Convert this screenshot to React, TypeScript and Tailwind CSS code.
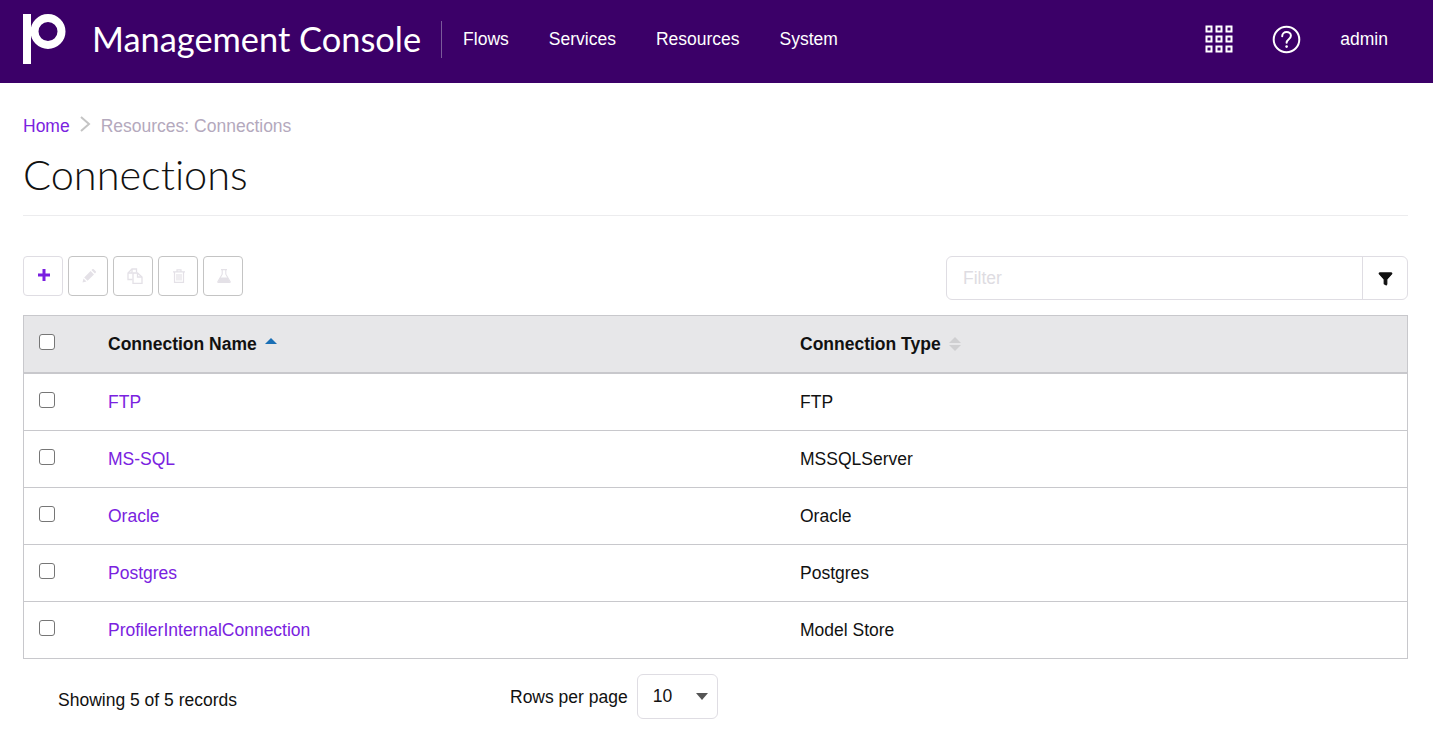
import type { ReactNode } from 'react';
import { Filter } from 'lucide-react';

const rows = [
  { name: 'FTP', type: 'FTP' },
  { name: 'MS-SQL', type: 'MSSQLServer' },
  { name: 'Oracle', type: 'Oracle' },
  { name: 'Postgres', type: 'Postgres' },
  { name: 'ProfilerInternalConnection', type: 'Model Store' },
];

function Logo() {
  return (
    <svg width="43" height="50" viewBox="0 0 43 50" fill="none">
      <rect x="0" y="0" width="8" height="50" fill="#fff" />
      <circle cx="25" cy="17.5" r="13.5" stroke="#fff" strokeWidth="8" />
    </svg>
  );
}

function GridIcon() {
  return (
    <svg width="28" height="28" viewBox="0 0 28 28" fill="none" stroke="#fff" strokeWidth="2">
      {[1.5, 11.5, 21.5].map((y) =>
        [1.5, 11.5, 21.5].map((x) => <rect key={`${x}-${y}`} x={x} y={y} width="5" height="5" />),
      )}
    </svg>
  );
}

function HelpIcon() {
  return (
    <svg width="29" height="29" viewBox="0 0 29 29" fill="none" stroke="#fff" strokeWidth="2">
      <circle cx="14.5" cy="14.5" r="12.8" />
      <path d="M10.2 11.2c0-2.6 2-4.2 4.4-4.2s4.3 1.6 4.3 3.8c0 3.4-4.3 3.4-4.3 7" strokeLinecap="round" />
      <circle cx="14.6" cy="21.6" r="1.3" fill="#fff" stroke="none" />
    </svg>
  );
}

function PencilIcon() {
  return (
    <svg className="ml-[2px]" width="14" height="14" viewBox="0 0 14 14" fill="#e4e1e7">
      <path d="M0.5 13.5l1-4 3 3zM2.2 8.4l6.4-6.4 3.4 3.4-6.4 6.4zM9.5 1.1l.8-.8c.4-.4 1-.4 1.4 0l2 2c.4.4.4 1 0 1.4l-.8.8z" />
    </svg>
  );
}

function CopyIcon() {
  return (
    <svg className="ml-[3px]" width="16" height="16" viewBox="0 0 16 16" fill="none" stroke="#e4e1e7" strokeWidth="1.3">
      <path d="M5.5 11.5H1V5l4-4h4.5v3.5" />
      <path d="M1 5h4V1" />
      <path d="M6 5h4.5L15 9v6.4H6z" />
      <path d="M10.5 5v4H15" />
    </svg>
  );
}

function TrashIcon() {
  return (
    <svg className="ml-[2px]" width="12" height="14" viewBox="0 0 12 14" fill="none" stroke="#e4e1e7" strokeWidth="1.2">
      <path d="M0 2.8h12M4 2.5V.8h4v1.7M1.5 3v10.4h9V3M4 5v6.5M6 5v6.5M8 5v6.5" />
    </svg>
  );
}

function FlaskIcon() {
  return (
    <svg className="ml-[2px]" width="14" height="14" viewBox="0 0 14 14" fill="none">
      <path d="M4 .6h6M5.2.6v4.6L.9 12.6c-.3.5 0 .9.5.9h11.2c.5 0 .8-.4.5-.9L8.800 5.200V.6" stroke="#e4e1e7" strokeWidth="1.1" />
      <path d="M3.400 8.500h7.200l2.600 5H.8z" fill="#e4e1e7" />
    </svg>
  );
}

function ToolButton({ children, light }: { children: ReactNode; light?: boolean }) {
  return (
    <button className={`flex h-10 w-10 items-center justify-center rounded border bg-white ${light ? 'border-[#dfdde3]' : 'border-[#c4c4c4]'}`}>
      {children}
    </button>
  );
}

function SortUp() {
  return <span className="ml-2 mt-[-5px] block border-x-[6px] border-b-[6px] border-x-transparent border-b-[#1a6fb5]" />;
}

function SortBoth() {
  return (
    <span className="ml-2 flex flex-col gap-[2px]">
      <span className="block border-x-[6px] border-b-[6px] border-x-transparent border-b-[#cfcfd1]" />
      <span className="block border-x-[6px] border-t-[6px] border-x-transparent border-t-[#cfcfd1]" />
    </span>
  );
}

function Check() {
  return <span className="block h-4 w-4 rounded-[3px] border border-[#767676] bg-white" />;
}

export default function App() {
  return (
    <div className="min-h-[738px] bg-white font-['Liberation_Sans',Arial,sans-serif] text-[17.5px] text-[#111]">
      <header className="flex h-[83px] items-center bg-[#3b0068] pl-[23px] pr-[45px] text-white">
        <div className="mt-[-5px]"><Logo /></div>
        <div className="ml-[26px] mt-[-5px] font-['Lato',sans-serif] text-[34.4px] font-normal whitespace-nowrap [font-variant-ligatures:none]">Management Console</div>
        <div className="ml-5 mt-[-5px] h-[37px] w-px bg-[#7a5a9a]" />
        <nav className="ml-[21px] mt-[-5px] flex gap-10">
          <span>Flows</span>
          <span>Services</span>
          <span>Resources</span>
          <span>System</span>
        </nav>
        <div className="ml-auto mt-[-5px] flex items-center">
          <GridIcon />
          <div className="ml-[39px]"><HelpIcon /></div>
          <span className="ml-[39px]">admin</span>
        </div>
      </header>

      <main className="pl-[23px] pr-[25px]">
        <div className="mt-[33px] flex items-center leading-[20px]">
          <span className="text-[#7a22e0]">Home</span>
          <svg className="mx-[9px] mt-[-4px]" width="13" height="18" viewBox="0 0 13 18" fill="none" stroke="#c4c4c4" strokeWidth="2">
            <path d="M2 2l8 7-8 7" />
          </svg>
          <span className="text-[#b4a9bd]">Resources: Connections</span>
        </div>
        <h1 className="mt-[11px] border-b border-[#ececee] pb-[14px] font-['Lato',sans-serif] text-[41.5px] font-light leading-[54px] text-[#111] [font-variant-ligatures:none]">Connections</h1>

        <div className="mt-10 flex items-start justify-between">
          <div className="flex gap-[5px]">
            <ToolButton light>
              <svg className="ml-[2px] mt-[-2px]" width="12" height="12" viewBox="0 0 12 12" fill="#7a1fe0"><path d="M4.500 0h3v4.500H12v3H7.500V12h-3V7.500H0v-3h4.500z" /></svg>
            </ToolButton>
            <ToolButton><PencilIcon /></ToolButton>
            <ToolButton><CopyIcon /></ToolButton>
            <ToolButton><TrashIcon /></ToolButton>
            <ToolButton><FlaskIcon /></ToolButton>
          </div>
          <div className="flex h-11 w-[462px] rounded-md border border-[#dfdde3]">
            <div className="flex-1 pl-4 leading-[42px] text-[#dedce2]">Filter</div>
            <div className="flex w-[45px] items-center justify-center border-l border-[#dfdde3]">
              <Filter size={15} fill="#111" stroke="#111" />
            </div>
          </div>
        </div>

        <table className="mt-[15px] w-full table-fixed border border-[#c8c8cc]">
          <thead>
            <tr className="h-[57px] border-b-2 border-[#c8c8cc] bg-[#e7e7e9] text-left">
              <th className="w-[84.5px] pl-[15px]"><div className="mt-[-4px]"><Check /></div></th>
              <th className="w-[692px] font-bold"><div className="flex items-center">Connection Name<SortUp /></div></th>
              <th className="font-bold"><div className="flex items-center">Connection Type<SortBoth /></div></th>
            </tr>
          </thead>
          <tbody>
            {rows.map((row) => (
              <tr key={row.name} className="h-[57px] border-b border-[#c8c8cc] first:h-[58px] last:border-b-0">
                <td className="pl-[15px]"><div className="mt-[-4px]"><Check /></div></td>
                <td className="text-[#7a22e0]">{row.name}</td>
                <td>{row.type}</td>
              </tr>
            ))}
          </tbody>
        </table>

        <div className="mt-[15px] flex">
          <div className="ml-[35px] mt-[13px] w-[452px]">Showing 5 of 5 records</div>
          <div className="flex items-center">
            <span className="mr-[9px] mt-[1px]">Rows per page</span>
            <div className="flex h-[45px] w-[81px] items-center justify-between rounded-md border border-[#dfdde3] pl-[15px] pr-[9px]">
              <span>10</span>
              <span className="block border-x-[6px] border-t-[7px] border-x-transparent border-t-[#555]" />
            </div>
          </div>
        </div>
      </main>
    </div>
  );
}
